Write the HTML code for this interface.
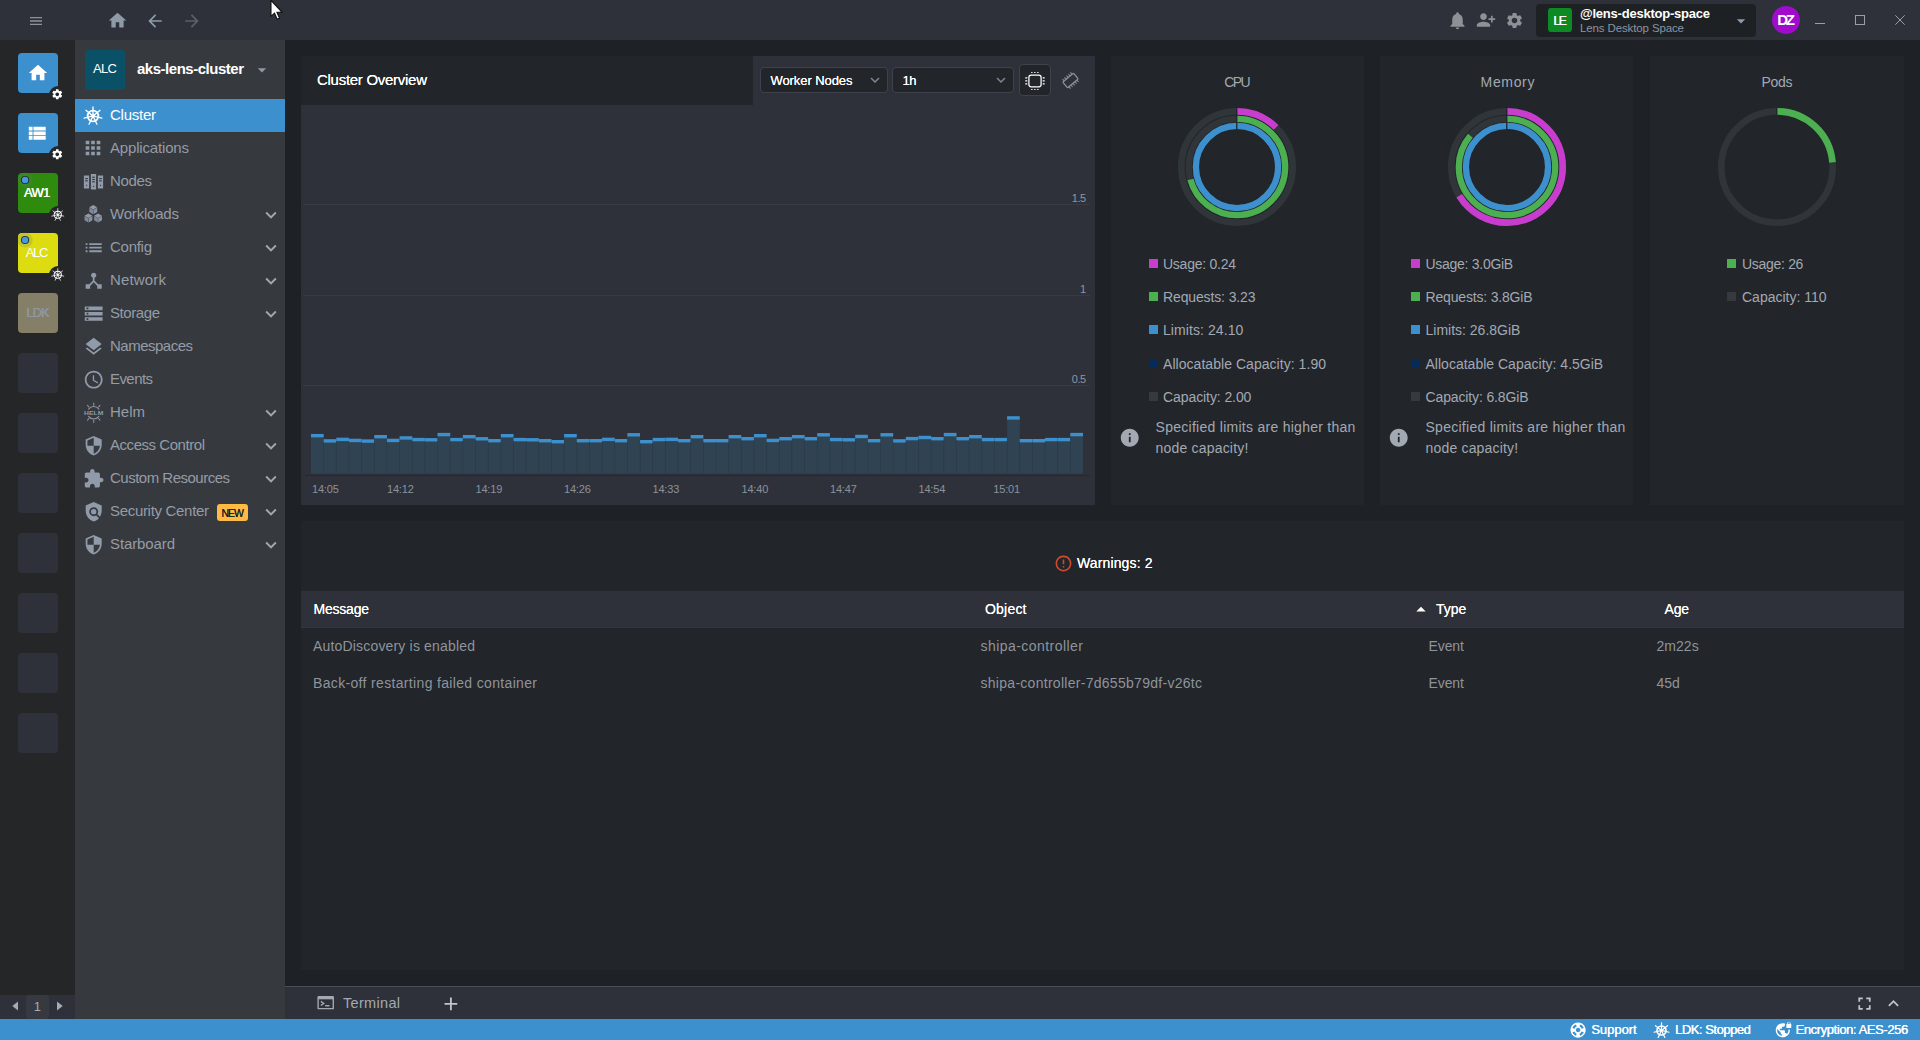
<!DOCTYPE html>
<html><head><meta charset="utf-8"><title>Lens</title>
<style>
html,body{margin:0;padding:0}
body{width:1920px;height:1040px;overflow:hidden;position:relative;background:#1e2125;font-family:"Liberation Sans",sans-serif;}
.b{position:absolute}
.i{position:absolute;overflow:visible}
.t{position:absolute;white-space:nowrap;line-height:20px;height:20px}
</style></head><body>
<div class="b" style="left:0px;top:0px;width:1920px;height:40px;background:#2e3139;"></div>
<div class="b" style="left:0px;top:40px;width:75px;height:979px;background:#252628;"></div>
<div class="b" style="left:75px;top:40px;width:210px;height:979px;background:#36393e;"></div>
<div class="b" style="left:0px;top:1019px;width:1920px;height:21px;background:#3d90ce;"></div>
<svg class="i" style="left:28px;top:12.5px" width="16" height="16" viewBox="0 0 24 24" fill="#8e9297" ><path d="M3 18h18v-2H3v2zm0-5h18v-2H3v2zm0-7v2h18V6H3z"/></svg>
<svg class="i" style="left:107px;top:10px" width="21" height="21" viewBox="0 0 24 24" fill="#8e9aa8" ><path d="M10 20v-6h4v6h5v-8h3L12 3 2 12h3v8z"/></svg>
<svg class="i" style="left:145px;top:10.5px" width="20" height="20" viewBox="0 0 24 24" fill="#8e9aa8" ><path d="M20 11H7.83l5.59-5.59L12 4l-8 8 8 8 1.41-1.41L7.83 13H20v-2z"/></svg>
<svg class="i" style="left:181.5px;top:10.5px" width="20" height="20" viewBox="0 0 24 24" fill="#5a606a" ><path d="M12 4l-1.41 1.41L16.17 11H4v2h12.17l-5.58 5.59L12 20l8-8z"/></svg>
<svg class="i" style="left:1447px;top:9.8px" width="21" height="21" viewBox="0 0 24 24" fill="#8e9297" ><path d="M12 22c1.1 0 2-.9 2-2h-4c0 1.1.89 2 2 2zm6-6v-5c0-3.07-1.64-5.64-4.5-6.32V4c0-.83-.67-1.5-1.5-1.5s-1.5.67-1.5 1.5v.68C7.63 5.36 6 7.92 6 11v5l-2 2v1h16v-1l-2-2z"/></svg>
<svg class="i" style="left:1476px;top:10px" width="20" height="20" viewBox="0 0 24 24" fill="#8e9297" ><path d="M13 8c0-2.21-1.79-4-4-4S5 5.79 5 8s1.79 4 4 4 4-1.79 4-4zm2 2v2h3v3h2v-3h3v-2h-3V7h-2v3h-3zM1 18v2h16v-2c0-2.66-5.33-4-8-4s-8 1.34-8 4z"/></svg>
<svg class="i" style="left:1505px;top:10.5px" width="19" height="19" viewBox="0 0 24 24" fill="#8e9297" ><path d="M19.14 12.94c.04-.3.06-.61.06-.94 0-.32-.02-.64-.07-.94l2.03-1.58c.18-.14.23-.41.12-.61l-1.92-3.32c-.12-.22-.37-.29-.59-.22l-2.39.96c-.5-.38-1.03-.7-1.62-.94l-.36-2.54c-.04-.24-.24-.41-.48-.41h-3.84c-.24 0-.43.17-.47.41l-.36 2.54c-.59.24-1.13.57-1.62.94l-2.39-.96c-.22-.08-.47 0-.59.22L2.74 8.87c-.12.21-.08.47.12.61l2.03 1.58c-.05.3-.09.63-.09.94s.02.64.07.94l-2.03 1.58c-.18.14-.23.41-.12.61l1.92 3.32c.12.22.37.29.59.22l2.39-.96c.5.38 1.03.7 1.62.94l.36 2.54c.05.24.24.41.48.41h3.84c.24 0 .44-.17.47-.41l.36-2.54c.59-.24 1.13-.56 1.62-.94l2.39.96c.22.08.47 0 .59-.22l1.92-3.32c.12-.22.07-.47-.12-.61l-2.01-1.58zM12 15.6c-1.98 0-3.6-1.62-3.6-3.6s1.62-3.6 3.6-3.6 3.6 1.62 3.6 3.6-1.62 3.6-3.6 3.6z"/></svg>
<div class="b" style="left:1536px;top:4px;width:220px;height:33px;background:#1e2124;border-radius:4px;"></div>
<div class="b" style="left:1548px;top:8px;width:24px;height:24px;background:#0e8a25;border-radius:3px;"></div>
<div class="t" style="left:1553.3px;top:10.5px;font-size:12px;color:#fff;letter-spacing:-1.478px;text-shadow:.4px 0 0 #fff;">LE</div>
<div class="t" style="left:1580px;top:3.5px;font-size:13px;color:#fff;font-weight:700;letter-spacing:-0.225px;">@lens-desktop-space</div>
<div class="t" style="left:1580px;top:17.8px;font-size:11.5px;color:#8a94a4;letter-spacing:-0.125px;">Lens Desktop Space</div>
<svg class="i" style="left:1731px;top:10.5px" width="20" height="20" viewBox="0 0 24 24" fill="#8e9ab0" ><path d="M7 10l5 5 5-5z"/></svg>
<div class="b" style="left:1772px;top:6px;width:28px;height:28px;border-radius:50%;background:#a00ccc"></div>
<div class="t" style="left:1777.2px;top:10px;font-size:15px;color:#fff;font-weight:700;letter-spacing:-2.195px;">DZ</div>
<div class="b" style="left:1815px;top:23px;width:10px;height:1px;background:#9a9fa6;"></div>
<div class="b" style="left:1855px;top:15px;width:8px;height:8px;border:1px solid #9a9fa6"></div>
<svg class="i" style="left:1895px;top:15px" width="10" height="10" viewBox="0 0 10 10"><path d="M0.300 0.300L9.700 9.700M9.700 0.300L0.300 9.700" stroke="#9a9fa6" stroke-width="1" fill="none"/></svg>
<svg class="i" style="left:269px;top:0px" width="16" height="22" viewBox="0 0 16 22"><path d="M2 0.400L2 16.400L5.500 13.100L8.200 19.200L10.600 18.200L7.900 12.200L12.900 12.100Z" fill="#fff" stroke="#0c0c0e" stroke-width="1.050" stroke-linejoin="miter"/></svg>
<div class="b" style="left:18px;top:53px;width:40px;height:40px;background:#3d90ce;border-radius:4px;"></div>
<svg class="i" style="left:26.8px;top:62.3px" width="22" height="22" viewBox="0 0 24 24" fill="#fff" ><path d="M10 20v-6h4v6h5v-8h3L12 3 2 12h3v8z"/></svg>
<div class="b" style="left:18px;top:113px;width:40px;height:40px;background:#3d90ce;border-radius:4px;"></div>
<svg class="i" style="left:26.45px;top:122.15px" width="22.5" height="22.5" viewBox="0 0 24 24" fill="#fff" ><path d="M3 14h4v-4H3v4zm0 5h4v-4H3v4zM3 9h4V5H3v4zm5 5h13v-4H8v4zm0 5h13v-4H8v4zM8 5v4h13V5H8z"/></svg>
<div class="b" style="left:18px;top:173px;width:40px;height:40px;background:#2e8b0e;border-radius:4px;"></div>
<div class="t" style="left:23.8px;top:182.5px;font-size:13px;color:#fff;letter-spacing:-0.744px;text-shadow:.4px 0 0 #fff;">AW1</div>
<div class="b" style="left:18px;top:233px;width:40px;height:40px;background:#dcdc10;border-radius:4px;"></div>
<div class="t" style="left:25.8px;top:242.5px;font-size:13px;color:#fff;letter-spacing:-1.395px;">ALC</div>
<div class="b" style="left:18px;top:293px;width:40px;height:40px;background:#857f68;border-radius:4px;"></div>
<div class="t" style="left:26.2px;top:302.5px;font-size:13px;color:#8f97a3;letter-spacing:-0.995px;text-shadow:.4px 0 0 #8f97a3;">LDK</div>
<div class="b" style="left:18px;top:353px;width:40px;height:40px;background:#2e313a;border-radius:4px;"></div>
<div class="b" style="left:18px;top:413px;width:40px;height:40px;background:#2e313a;border-radius:4px;"></div>
<div class="b" style="left:18px;top:473px;width:40px;height:40px;background:#2e313a;border-radius:4px;"></div>
<div class="b" style="left:18px;top:533px;width:40px;height:40px;background:#2e313a;border-radius:4px;"></div>
<div class="b" style="left:18px;top:593px;width:40px;height:40px;background:#2e313a;border-radius:4px;"></div>
<div class="b" style="left:18px;top:653px;width:40px;height:40px;background:#2e313a;border-radius:4px;"></div>
<div class="b" style="left:18px;top:713px;width:40px;height:40px;background:#2e313a;border-radius:4px;"></div>
<div class="b" style="left:48.6px;top:85.5px;width:18px;height:18px;border-radius:50%;background:#252628"></div><svg class="i" style="left:51.35px;top:88.25px" width="12.5" height="12.5" viewBox="0 0 24 24" fill="#fff" ><path d="M19.14 12.94c.04-.3.06-.61.06-.94 0-.32-.02-.64-.07-.94l2.03-1.58c.18-.14.23-.41.12-.61l-1.92-3.32c-.12-.22-.37-.29-.59-.22l-2.39.96c-.5-.38-1.03-.7-1.62-.94l-.36-2.54c-.04-.24-.24-.41-.48-.41h-3.84c-.24 0-.43.17-.47.41l-.36 2.54c-.59.24-1.13.57-1.62.94l-2.39-.96c-.22-.08-.47 0-.59.22L2.74 8.87c-.12.21-.08.47.12.61l2.03 1.58c-.05.3-.09.63-.09.94s.02.64.07.94l-2.03 1.58c-.18.14-.23.41-.12.61l1.92 3.32c.12.22.37.29.59.22l2.39-.96c.5.38 1.03.7 1.62.94l.36 2.54c.05.24.24.41.48.41h3.84c.24 0 .44-.17.47-.41l.36-2.54c.59-.24 1.13-.56 1.62-.94l2.39.96c.22.08.47 0 .59-.22l1.92-3.32c.12-.22.07-.47-.12-.61l-2.01-1.58zM12 15.6c-1.98 0-3.6-1.62-3.6-3.6s1.62-3.6 3.6-3.6 3.6 1.62 3.6 3.6-1.62 3.6-3.6 3.6z"/></svg>
<div class="b" style="left:48.6px;top:145.5px;width:18px;height:18px;border-radius:50%;background:#252628"></div><svg class="i" style="left:51.35px;top:148.25px" width="12.5" height="12.5" viewBox="0 0 24 24" fill="#fff" ><path d="M19.14 12.94c.04-.3.06-.61.06-.94 0-.32-.02-.64-.07-.94l2.03-1.58c.18-.14.23-.41.12-.61l-1.92-3.32c-.12-.22-.37-.29-.59-.22l-2.39.96c-.5-.38-1.03-.7-1.62-.94l-.36-2.54c-.04-.24-.24-.41-.48-.41h-3.84c-.24 0-.43.17-.47.41l-.36 2.54c-.59.24-1.13.57-1.62.94l-2.39-.96c-.22-.08-.47 0-.59.22L2.74 8.87c-.12.21-.08.47.12.61l2.03 1.58c-.05.3-.09.63-.09.94s.02.64.07.94l-2.03 1.58c-.18.14-.23.41-.12.61l1.92 3.32c.12.22.37.29.59.22l2.39-.96c.5.38 1.03.7 1.62.94l.36 2.54c.05.24.24.41.48.41h3.84c.24 0 .44-.17.47-.41l.36-2.54c.59-.24 1.13-.56 1.62-.94l2.39.96c.22.08.47 0 .59-.22l1.92-3.32c.12-.22.07-.47-.12-.61l-2.01-1.58zM12 15.6c-1.98 0-3.6-1.62-3.6-3.6s1.62-3.6 3.6-3.6 3.6 1.62 3.6 3.6-1.62 3.6-3.6 3.6z"/></svg>
<div class="b" style="left:48.6px;top:205.5px;width:18px;height:18px;border-radius:50%;background:#252628"></div><svg class="i" style="left:50.85px;top:207.75px" width="13.5" height="13.5" viewBox="0 0 24 24" fill="#fff" ><g fill="none" stroke="#fff" stroke-linecap="round"><circle cx="12" cy="12" r="6.400" stroke-width="1.8125"/><line x1="12.00" y1="10.80" x2="12.00" y2="1.10" stroke-width="1.3125"/><line x1="12.94" y1="11.25" x2="20.52" y2="5.20" stroke-width="1.3125"/><line x1="13.17" y1="12.27" x2="22.63" y2="14.43" stroke-width="1.3125"/><line x1="12.52" y1="13.08" x2="16.73" y2="21.82" stroke-width="1.3125"/><line x1="11.48" y1="13.08" x2="7.27" y2="21.82" stroke-width="1.3125"/><line x1="10.83" y1="12.27" x2="1.37" y2="14.43" stroke-width="1.3125"/><line x1="11.06" y1="11.25" x2="3.48" y2="5.20" stroke-width="1.3125"/></g><circle cx="12" cy="12" r="2" fill="#fff"/></svg>
<div class="b" style="left:48.6px;top:265.5px;width:18px;height:18px;border-radius:50%;background:#252628"></div><svg class="i" style="left:50.85px;top:267.75px" width="13.5" height="13.5" viewBox="0 0 24 24" fill="#fff" ><g fill="none" stroke="#fff" stroke-linecap="round"><circle cx="12" cy="12" r="6.400" stroke-width="1.8125"/><line x1="12.00" y1="10.80" x2="12.00" y2="1.10" stroke-width="1.3125"/><line x1="12.94" y1="11.25" x2="20.52" y2="5.20" stroke-width="1.3125"/><line x1="13.17" y1="12.27" x2="22.63" y2="14.43" stroke-width="1.3125"/><line x1="12.52" y1="13.08" x2="16.73" y2="21.82" stroke-width="1.3125"/><line x1="11.48" y1="13.08" x2="7.27" y2="21.82" stroke-width="1.3125"/><line x1="10.83" y1="12.27" x2="1.37" y2="14.43" stroke-width="1.3125"/><line x1="11.06" y1="11.25" x2="3.48" y2="5.20" stroke-width="1.3125"/></g><circle cx="12" cy="12" r="2" fill="#fff"/></svg>
<svg class="i" style="left:15px;top:170px" width="20" height="20" viewBox="0 0 20 20"><circle cx="10.1" cy="10" r="7.600" fill="rgba(110,125,120,.22)"/><circle cx="10.1" cy="10" r="4.100" fill="#1f2930"/><circle cx="10.1" cy="10" r="3.200" fill="#4898de"/></svg>
<svg class="i" style="left:15px;top:230px" width="20" height="20" viewBox="0 0 20 20"><circle cx="10.1" cy="10" r="7.600" fill="rgba(110,125,120,.22)"/><circle cx="10.1" cy="10" r="4.100" fill="#1f2930"/><circle cx="10.1" cy="10" r="3.200" fill="#4898de"/></svg>
<div class="b" style="left:0px;top:995px;width:75px;height:24px;background:#2e3139;"></div>
<div class="b" style="left:26px;top:995px;width:23px;height:24px;background:#363a40;border-radius:4px;"></div>
<svg class="i" style="left:11px;top:1000.4px" width="8" height="12" viewBox="0 0 8 12"><path d="M7 1.500v9L1.300 6z" fill="#a4abb4"/></svg>
<svg class="i" style="left:56px;top:1000.4px" width="8" height="12" viewBox="0 0 8 12"><path d="M1 1.500v9L6.700 6z" fill="#a4abb4"/></svg>
<div class="t" style="left:33.8px;top:996.6px;font-size:13px;color:#a4abb4;">1</div>
<div class="b" style="left:85px;top:50px;width:40px;height:40px;background:#0a5168;border-radius:4px;"></div>
<div class="t" style="left:93px;top:59px;font-size:13px;color:#fff;letter-spacing:-0.645px;">ALC</div>
<div class="t" style="left:137px;top:59px;font-size:15px;color:#fff;font-weight:700;letter-spacing:-0.481px;">aks-lens-cluster</div>
<svg class="i" style="left:252px;top:60px" width="20" height="20" viewBox="0 0 24 24" fill="#8e9aa8" ><path d="M7 10l5 5 5-5z"/></svg>
<div class="b" style="left:75px;top:99px;width:210px;height:33px;background:#3d90ce;"></div>
<div class="t" style="left:110px;top:105px;font-size:15px;color:#fff;letter-spacing:-0.252px;">Cluster</div>
<svg class="i" style="left:82.7px;top:105.5px" width="20" height="20" viewBox="0 0 24 24" fill="#fff" ><g fill="none" stroke="#fff" stroke-linecap="round"><circle cx="12" cy="12" r="6.400" stroke-width="2.175"/><line x1="12.00" y1="10.80" x2="12.00" y2="1.10" stroke-width="1.575"/><line x1="12.94" y1="11.25" x2="20.52" y2="5.20" stroke-width="1.575"/><line x1="13.17" y1="12.27" x2="22.63" y2="14.43" stroke-width="1.575"/><line x1="12.52" y1="13.08" x2="16.73" y2="21.82" stroke-width="1.575"/><line x1="11.48" y1="13.08" x2="7.27" y2="21.82" stroke-width="1.575"/><line x1="10.83" y1="12.27" x2="1.37" y2="14.43" stroke-width="1.575"/><line x1="11.06" y1="11.25" x2="3.48" y2="5.20" stroke-width="1.575"/></g><circle cx="12" cy="12" r="2" fill="#fff"/></svg>
<div class="t" style="left:110px;top:138px;font-size:15px;color:#959ca6;letter-spacing:-0.171px;">Applications</div>
<svg class="i" style="left:82.3px;top:137.1px" width="22" height="22" viewBox="0 0 24 24" fill="#909aa8" ><path d="M4 8h4V4H4v4zm6 12h4v-4h-4v4zm-6 0h4v-4H4v4zm0-6h4v-4H4v4zm6 0h4v-4h-4v4zm6-10v4h4V4h-4zm-6 4h4V4h-4v4zm6 6h4v-4h-4v4zm0 6h4v-4h-4v4z"/></svg>
<div class="t" style="left:110px;top:171px;font-size:15px;color:#959ca6;letter-spacing:-0.340px;">Nodes</div>
<svg class="i" style="left:82.8px;top:171px" width="21" height="21" viewBox="0 0 24 24" fill="#909aa8" ><path d="M1 5h6v15H1zM9 3.5h6V21H9zM17 5h6v15h-6z"/><g fill="#36393e"><rect x="2.5" y="8" width="3" height="1.3"/><rect x="2.5" y="10.6" width="3" height="1.3"/><rect x="10.5" y="6.5" width="3" height="1.3"/><rect x="10.5" y="9.1" width="3" height="1.3"/><rect x="10.5" y="11.7" width="3" height="1.3"/><rect x="18.500" y="8" width="3" height="1.3"/><rect x="18.500" y="10.6" width="3" height="1.3"/><rect x="3.4" y="15.800" width="1.3" height="1.3"/><rect x="11.4" y="17" width="1.3" height="1.3"/><rect x="19.4" y="15.800" width="1.3" height="1.3"/></g></svg>
<div class="t" style="left:110px;top:204px;font-size:15px;color:#959ca6;letter-spacing:-0.198px;">Workloads</div>
<svg class="i" style="left:83.05px;top:204.05px" width="20.5" height="20.5" viewBox="0 0 24 24" fill="#909aa8" ><path d="M12 1.3L16.611 3.95L12 6.6L7.389 3.95Z" opacity="1"/><path d="M7.389 4.4L11.78 6.95L11.78 12.1L7.389 9.45Z" opacity=".82"/><path d="M16.611 4.4L12.22 6.95L12.22 12.1L16.611 9.45Z" opacity=".92"/><path d="M6.4 11L11.011 13.65L6.4 16.3L1.789 13.65Z" opacity="1"/><path d="M1.789 14.1L6.18 16.65L6.18 21.8L1.789 19.15Z" opacity=".82"/><path d="M11.011 14.1L6.62 16.65L6.62 21.8L11.011 19.15Z" opacity=".92"/><path d="M17.6 11L22.211 13.65L17.6 16.3L12.989 13.65Z" opacity="1"/><path d="M12.989 14.1L17.38 16.65L17.38 21.8L12.989 19.15Z" opacity=".82"/><path d="M22.211 14.1L17.82 16.65L17.82 21.8L22.211 19.15Z" opacity=".92"/></svg>
<svg class="i" style="left:259.6px;top:203.5px" width="22" height="22" viewBox="0 0 24 24" fill="#a0a7b0" ><path d="M7.41 8.59L12 13.17l4.59-4.58L18 10l-6 6-6-6 1.41-1.41z"/></svg>
<div class="t" style="left:110px;top:237px;font-size:15px;color:#959ca6;letter-spacing:-0.272px;">Config</div>
<svg class="i" style="left:82.7px;top:236.8px" width="21.4" height="21.4" viewBox="0 0 24 24" fill="#909aa8" ><path d="M3 13h2v-2H3v2zm0 4h2v-2H3v2zm0-8h2V7H3v2zm4 4h14v-2H7v2zm0 4h14v-2H7v2zM7 7v2h14V7H7z"/></svg>
<svg class="i" style="left:259.6px;top:236.5px" width="22" height="22" viewBox="0 0 24 24" fill="#a0a7b0" ><path d="M7.41 8.59L12 13.17l4.59-4.58L18 10l-6 6-6-6 1.41-1.41z"/></svg>
<div class="t" style="left:110px;top:270px;font-size:15px;color:#959ca6;letter-spacing:0.165px;">Network</div>
<svg class="i" style="left:82.7px;top:269.8px" width="21.4" height="21.4" viewBox="0 0 24 24" fill="#909aa8" ><path d="M17 16l-4-4V8.82C14.16 8.4 15 7.3 15 6c0-1.66-1.34-3-3-3S9 4.34 9 6c0 1.3.84 2.4 2 2.82V12l-4 4H3v5h5v-3.05l4-4.2 4 4.2V21h5v-5h-4z"/></svg>
<svg class="i" style="left:259.6px;top:269.5px" width="22" height="22" viewBox="0 0 24 24" fill="#a0a7b0" ><path d="M7.41 8.59L12 13.17l4.59-4.58L18 10l-6 6-6-6 1.41-1.41z"/></svg>
<div class="t" style="left:110px;top:303px;font-size:15px;color:#959ca6;letter-spacing:-0.423px;">Storage</div>
<svg class="i" style="left:82.7px;top:302.8px" width="21.4" height="21.4" viewBox="0 0 24 24" fill="#909aa8" ><path d="M2 20h20v-4H2v4zm2-3h2v2H4v-2zM2 4v4h20V4H2zm4 3H4V5h2v2zm-4 7h20v-4H2v4zm2-3h2v2H4v-2z"/></svg>
<svg class="i" style="left:259.6px;top:302.5px" width="22" height="22" viewBox="0 0 24 24" fill="#a0a7b0" ><path d="M7.41 8.59L12 13.17l4.59-4.58L18 10l-6 6-6-6 1.41-1.41z"/></svg>
<div class="t" style="left:110px;top:336px;font-size:15px;color:#959ca6;letter-spacing:-0.504px;">Namespaces</div>
<svg class="i" style="left:82.7px;top:335.8px" width="21.4" height="21.4" viewBox="0 0 24 24" fill="#909aa8" ><path d="M11.99 18.54l-7.37-5.73L3 14.07l9 7 9-7-1.63-1.27-7.38 5.74zM12 16l7.36-5.73L21 9l-9-7-9 7 1.63 1.27L12 16z"/></svg>
<div class="t" style="left:110px;top:369px;font-size:15px;color:#959ca6;letter-spacing:-0.571px;">Events</div>
<svg class="i" style="left:82.7px;top:368.8px" width="21.4" height="21.4" viewBox="0 0 24 24" fill="#909aa8" ><path d="M11.99 2C6.47 2 2 6.48 2 12s4.47 10 9.99 10C17.52 22 22 17.52 22 12S17.52 2 11.99 2zM12 20c-4.42 0-8-3.58-8-8s3.58-8 8-8 8 3.58 8 8-3.58 8-8 8zm.5-13H11v6l5.25 3.15.75-1.23-4.5-2.67z"/></svg>
<div class="t" style="left:110px;top:402px;font-size:15px;color:#959ca6;letter-spacing:-0.001px;">Helm</div>
<svg class="i" style="left:82.65px;top:401.75px" width="21.5" height="21.5" viewBox="0 0 24 24" fill="#909aa8" ><g fill="none" stroke="#909aa8" stroke-width="1.15" stroke-linecap="round"><path d="M6.270 8A7 7 0 0 1 17.730 8"/><path d="M6.270 16A7 7 0 0 0 17.730 16"/><path d="M12 3.600V1.200M6.600 5.570L5.060 3.730M17.400 5.570L18.940 3.730M12 20.400V22.800M6.600 18.430L5.060 20.270M17.400 18.430L18.940 20.270"/></g><text x="12" y="14.250" font-family="Liberation Sans, sans-serif" font-weight="700" font-size="6.200" text-anchor="middle" textLength="21.500" lengthAdjust="spacingAndGlyphs" fill="#909aa8">HELM</text></svg>
<svg class="i" style="left:259.6px;top:401.5px" width="22" height="22" viewBox="0 0 24 24" fill="#a0a7b0" ><path d="M7.41 8.59L12 13.17l4.59-4.58L18 10l-6 6-6-6 1.41-1.41z"/></svg>
<div class="t" style="left:110px;top:435px;font-size:15px;color:#959ca6;letter-spacing:-0.452px;">Access Control</div>
<svg class="i" style="left:82.7px;top:434.8px" width="21.4" height="21.4" viewBox="0 0 24 24" fill="#909aa8" ><path d="M12 1L3 5v6c0 5.55 3.84 10.74 9 12 5.16-1.26 9-6.45 9-12V5l-9-4zm0 10.99h7c-.53 4.12-3.28 7.79-7 8.94V12H5V6.3l7-3.11v8.8z"/></svg>
<svg class="i" style="left:259.6px;top:434.5px" width="22" height="22" viewBox="0 0 24 24" fill="#a0a7b0" ><path d="M7.41 8.59L12 13.17l4.59-4.58L18 10l-6 6-6-6 1.41-1.41z"/></svg>
<div class="t" style="left:110px;top:468px;font-size:15px;color:#959ca6;letter-spacing:-0.503px;">Custom Resources</div>
<svg class="i" style="left:82.7px;top:467.8px" width="21.4" height="21.4" viewBox="0 0 24 24" fill="#909aa8" ><path d="M20.5 11H19V7c0-1.1-.9-2-2-2h-4V3.5C13 2.12 11.88 1 10.5 1S8 2.12 8 3.5V5H4c-1.1 0-1.99.9-1.99 2v3.8H3.5c1.49 0 2.7 1.21 2.7 2.7s-1.21 2.7-2.7 2.7H2V20c0 1.1.9 2 2 2h3.8v-1.5c0-1.49 1.21-2.7 2.7-2.7 1.49 0 2.7 1.21 2.7 2.7V22H17c1.1 0 2-.9 2-2v-4h1.5c1.38 0 2.5-1.12 2.5-2.5S21.88 11 20.5 11z"/></svg>
<svg class="i" style="left:259.6px;top:467.5px" width="22" height="22" viewBox="0 0 24 24" fill="#a0a7b0" ><path d="M7.41 8.59L12 13.17l4.59-4.58L18 10l-6 6-6-6 1.41-1.41z"/></svg>
<div class="t" style="left:110px;top:501px;font-size:15px;color:#959ca6;letter-spacing:-0.312px;">Security Center</div>
<svg class="i" style="left:82.7px;top:500.8px" width="21.4" height="21.4" viewBox="0 0 24 24" fill="#909aa8" ><path d="M21 5l-9-4-9 4v6c0 5.55 3.84 10.74 9 12 2.3-.56 4.33-1.9 5.88-3.71l-3.12-3.12c-1.94 1.29-4.58 1.07-6.29-.64-1.95-1.95-1.95-5.12 0-7.07 1.95-1.95 5.12-1.95 7.07 0 1.71 1.71 1.92 4.35.64 6.29l2.9 2.9C20.29 15.69 21 13.38 21 11V5z"/><circle cx="12" cy="12" r="3"/></svg>
<svg class="i" style="left:259.6px;top:500.5px" width="22" height="22" viewBox="0 0 24 24" fill="#a0a7b0" ><path d="M7.41 8.59L12 13.17l4.59-4.58L18 10l-6 6-6-6 1.41-1.41z"/></svg>
<div class="t" style="left:110px;top:534px;font-size:15px;color:#959ca6;letter-spacing:-0.109px;">Starboard</div>
<svg class="i" style="left:82.7px;top:533.8px" width="21.4" height="21.4" viewBox="0 0 24 24" fill="#909aa8" ><path d="M12 1L3 5v6c0 5.55 3.84 10.74 9 12 5.16-1.26 9-6.45 9-12V5l-9-4zm0 10.99h7c-.53 4.12-3.28 7.79-7 8.94V12H5V6.3l7-3.11v8.8z"/></svg>
<svg class="i" style="left:259.6px;top:533.5px" width="22" height="22" viewBox="0 0 24 24" fill="#a0a7b0" ><path d="M7.41 8.59L12 13.17l4.59-4.58L18 10l-6 6-6-6 1.41-1.41z"/></svg>
<div class="b" style="left:217px;top:504px;width:31px;height:17px;background:#ffba44;border-radius:3px;"></div>
<div class="t" style="left:221.6px;top:502.6px;font-size:10.5px;color:#1c1f24;letter-spacing:-1.148px;text-shadow:0 0 .4px #1c1f24;">NEW</div>
<div class="b" style="left:301px;top:56px;width:794px;height:449px;background:#2e3139;"></div>
<div class="b" style="left:301px;top:56px;width:452px;height:48.5px;background:#22252a;"></div>
<div class="t" style="left:317px;top:70px;font-size:15px;color:#fff;letter-spacing:-0.279px;text-shadow:0 0 .4px #fff;">Cluster Overview</div>
<div class="b" style="left:760px;top:67px;width:128px;height:26px;background:#22252a;border:1px solid #3e424a;border-radius:4px;box-sizing:border-box;"></div><div class="t" style="left:770.5px;top:70.5px;font-size:13px;color:#fff;letter-spacing:-0.077px;text-shadow:0 0 .5px #fff;">Worker Nodes</div><svg class="i" style="left:865.7px;top:71.3px" width="18" height="18" viewBox="0 0 24 24" fill="#7f868f" ><path d="M7.41 8.59L12 13.17l4.59-4.58L18 10l-6 6-6-6 1.41-1.41z"/></svg>
<div class="b" style="left:892px;top:67px;width:122px;height:26px;background:#22252a;border:1px solid #3e424a;border-radius:4px;box-sizing:border-box;"></div><div class="t" style="left:902.5px;top:70.5px;font-size:13px;color:#fff;letter-spacing:-0.460px;text-shadow:0 0 .5px #fff;">1h</div><svg class="i" style="left:991.7px;top:71.3px" width="18" height="18" viewBox="0 0 24 24" fill="#7f868f" ><path d="M7.41 8.59L12 13.17l4.59-4.58L18 10l-6 6-6-6 1.41-1.41z"/></svg>
<div class="b" style="left:1019px;top:64px;width:32px;height:32px;background:#22252a;border:1px solid #3e424a;border-radius:4px;box-sizing:border-box;"></div>
<svg class="i" style="left:1022.8px;top:68.5px" width="24" height="24" viewBox="0 0 24 24" fill="none" ><g fill="none" stroke="#fff" stroke-width="1.25"><rect x="5.900" y="6.200" width="12.200" height="11.600" rx="2.200"/></g><g stroke="#fff" stroke-dasharray="1.300 1.700"><path d="M8.200 3.500h9M8.200 20.500h9" stroke-width="1.100"/><path d="M3.300 8.200v9M20.700 8.200v9" stroke-width="2"/></g></svg>
<svg class="i" style="left:1059px;top:69px" width="23" height="23" viewBox="0 0 24 24" fill="none" ><g transform="rotate(-40 12 12)" fill="none" stroke="#8a929c"><rect x="4.700" y="8.100" width="14.600" height="7.800" rx="1" stroke-width="1.350"/><path d="M6.6 15.900v2.700M6.6 8.100v-2.700M9.3 15.900v2.700M9.3 8.100v-2.700M12 15.900v2.700M12 8.100v-2.700M14.7 15.900v2.700M14.7 8.100v-2.700M17.4 15.900v2.700M17.4 8.100v-2.700" stroke-width="1.100"/></g></svg>
<div class="b" style="left:303px;top:204px;width:787px;height:1px;background:#383c40;"></div>
<div class="t" style="left:1071.8px;top:188px;font-size:11px;color:#8f97a2;letter-spacing:-0.496px;">1.5</div>
<div class="b" style="left:303px;top:295px;width:787px;height:1px;background:#383c40;"></div>
<div class="t" style="left:1080.1px;top:279px;font-size:11px;color:#8f97a2;letter-spacing:-1.718px;">1</div>
<div class="b" style="left:303px;top:385px;width:787px;height:1px;background:#383c40;"></div>
<div class="t" style="left:1071.8px;top:369px;font-size:11px;color:#8f97a2;letter-spacing:-0.496px;">0.5</div>
<div class="b" style="left:305px;top:475px;width:785px;height:1px;background:#25282e;"></div>
<svg class="i" style="left:0;top:400px" width="1100" height="80" viewBox="0 400 1100 80" shape-rendering="auto"><rect x="311.00" y="433.96" width="12.66" height="39.64" fill="#304352"/><rect x="311.00" y="433.96" width="12.66" height="3.4" fill="#3d90ce"/><rect x="323.66" y="439.20" width="12.66" height="34.40" fill="#304352"/><rect x="323.66" y="439.20" width="12.66" height="3.4" fill="#3d90ce"/><rect x="336.31" y="437.70" width="12.66" height="35.90" fill="#304352"/><rect x="336.31" y="437.70" width="12.66" height="3.4" fill="#3d90ce"/><rect x="348.97" y="438.75" width="12.66" height="34.85" fill="#304352"/><rect x="348.97" y="438.75" width="12.66" height="3.4" fill="#3d90ce"/><rect x="361.62" y="439.40" width="12.66" height="34.20" fill="#304352"/><rect x="361.62" y="439.40" width="12.66" height="3.4" fill="#3d90ce"/><rect x="374.28" y="435.00" width="12.66" height="38.60" fill="#304352"/><rect x="374.28" y="435.00" width="12.66" height="3.4" fill="#3d90ce"/><rect x="386.93" y="438.75" width="12.66" height="34.85" fill="#304352"/><rect x="386.93" y="438.75" width="12.66" height="3.4" fill="#3d90ce"/><rect x="399.59" y="436.25" width="12.66" height="37.35" fill="#304352"/><rect x="399.59" y="436.25" width="12.66" height="3.4" fill="#3d90ce"/><rect x="412.25" y="437.90" width="12.66" height="35.70" fill="#304352"/><rect x="412.25" y="437.90" width="12.66" height="3.4" fill="#3d90ce"/><rect x="424.90" y="438.10" width="12.66" height="35.50" fill="#304352"/><rect x="424.90" y="438.10" width="12.66" height="3.4" fill="#3d90ce"/><rect x="437.56" y="432.90" width="12.66" height="40.70" fill="#304352"/><rect x="437.56" y="432.90" width="12.66" height="3.4" fill="#3d90ce"/><rect x="450.21" y="437.90" width="12.66" height="35.70" fill="#304352"/><rect x="450.21" y="437.90" width="12.66" height="3.4" fill="#3d90ce"/><rect x="462.87" y="435.00" width="12.66" height="38.60" fill="#304352"/><rect x="462.87" y="435.00" width="12.66" height="3.4" fill="#3d90ce"/><rect x="475.52" y="437.10" width="12.66" height="36.50" fill="#304352"/><rect x="475.52" y="437.10" width="12.66" height="3.4" fill="#3d90ce"/><rect x="488.18" y="439.00" width="12.66" height="34.60" fill="#304352"/><rect x="488.18" y="439.00" width="12.66" height="3.4" fill="#3d90ce"/><rect x="500.84" y="434.00" width="12.66" height="39.60" fill="#304352"/><rect x="500.84" y="434.00" width="12.66" height="3.4" fill="#3d90ce"/><rect x="513.49" y="437.90" width="12.66" height="35.70" fill="#304352"/><rect x="513.49" y="437.90" width="12.66" height="3.4" fill="#3d90ce"/><rect x="526.15" y="438.10" width="12.66" height="35.50" fill="#304352"/><rect x="526.15" y="438.10" width="12.66" height="3.4" fill="#3d90ce"/><rect x="538.80" y="439.00" width="12.66" height="34.60" fill="#304352"/><rect x="538.80" y="439.00" width="12.66" height="3.4" fill="#3d90ce"/><rect x="551.46" y="440.00" width="12.66" height="33.60" fill="#304352"/><rect x="551.46" y="440.00" width="12.66" height="3.4" fill="#3d90ce"/><rect x="564.11" y="434.00" width="12.66" height="39.60" fill="#304352"/><rect x="564.11" y="434.00" width="12.66" height="3.4" fill="#3d90ce"/><rect x="576.77" y="439.00" width="12.66" height="34.60" fill="#304352"/><rect x="576.77" y="439.00" width="12.66" height="3.4" fill="#3d90ce"/><rect x="589.43" y="439.00" width="12.66" height="34.60" fill="#304352"/><rect x="589.43" y="439.00" width="12.66" height="3.4" fill="#3d90ce"/><rect x="602.08" y="437.70" width="12.66" height="35.90" fill="#304352"/><rect x="602.08" y="437.70" width="12.66" height="3.4" fill="#3d90ce"/><rect x="614.74" y="439.00" width="12.66" height="34.60" fill="#304352"/><rect x="614.74" y="439.00" width="12.66" height="3.4" fill="#3d90ce"/><rect x="627.39" y="433.10" width="12.66" height="40.50" fill="#304352"/><rect x="627.39" y="433.10" width="12.66" height="3.4" fill="#3d90ce"/><rect x="640.05" y="440.00" width="12.66" height="33.60" fill="#304352"/><rect x="640.05" y="440.00" width="12.66" height="3.4" fill="#3d90ce"/><rect x="652.70" y="437.90" width="12.66" height="35.70" fill="#304352"/><rect x="652.70" y="437.90" width="12.66" height="3.4" fill="#3d90ce"/><rect x="665.36" y="437.70" width="12.66" height="35.90" fill="#304352"/><rect x="665.36" y="437.70" width="12.66" height="3.4" fill="#3d90ce"/><rect x="678.02" y="439.00" width="12.66" height="34.60" fill="#304352"/><rect x="678.02" y="439.00" width="12.66" height="3.4" fill="#3d90ce"/><rect x="690.67" y="435.00" width="12.66" height="38.60" fill="#304352"/><rect x="690.67" y="435.00" width="12.66" height="3.4" fill="#3d90ce"/><rect x="703.33" y="439.00" width="12.66" height="34.60" fill="#304352"/><rect x="703.33" y="439.00" width="12.66" height="3.4" fill="#3d90ce"/><rect x="715.98" y="439.00" width="12.66" height="34.60" fill="#304352"/><rect x="715.98" y="439.00" width="12.66" height="3.4" fill="#3d90ce"/><rect x="728.64" y="435.00" width="12.66" height="38.60" fill="#304352"/><rect x="728.64" y="435.00" width="12.66" height="3.4" fill="#3d90ce"/><rect x="741.30" y="437.00" width="12.66" height="36.60" fill="#304352"/><rect x="741.30" y="437.00" width="12.66" height="3.4" fill="#3d90ce"/><rect x="753.95" y="434.00" width="12.66" height="39.60" fill="#304352"/><rect x="753.95" y="434.00" width="12.66" height="3.4" fill="#3d90ce"/><rect x="766.61" y="438.75" width="12.66" height="34.85" fill="#304352"/><rect x="766.61" y="438.75" width="12.66" height="3.4" fill="#3d90ce"/><rect x="779.26" y="437.00" width="12.66" height="36.60" fill="#304352"/><rect x="779.26" y="437.00" width="12.66" height="3.4" fill="#3d90ce"/><rect x="791.92" y="435.00" width="12.66" height="38.60" fill="#304352"/><rect x="791.92" y="435.00" width="12.66" height="3.4" fill="#3d90ce"/><rect x="804.57" y="437.00" width="12.66" height="36.60" fill="#304352"/><rect x="804.57" y="437.00" width="12.66" height="3.4" fill="#3d90ce"/><rect x="817.23" y="433.10" width="12.66" height="40.50" fill="#304352"/><rect x="817.23" y="433.10" width="12.66" height="3.4" fill="#3d90ce"/><rect x="829.89" y="437.90" width="12.66" height="35.70" fill="#304352"/><rect x="829.89" y="437.90" width="12.66" height="3.4" fill="#3d90ce"/><rect x="842.54" y="438.10" width="12.66" height="35.50" fill="#304352"/><rect x="842.54" y="438.10" width="12.66" height="3.4" fill="#3d90ce"/><rect x="855.20" y="434.80" width="12.66" height="38.80" fill="#304352"/><rect x="855.20" y="434.80" width="12.66" height="3.4" fill="#3d90ce"/><rect x="867.85" y="439.00" width="12.66" height="34.60" fill="#304352"/><rect x="867.85" y="439.00" width="12.66" height="3.4" fill="#3d90ce"/><rect x="880.51" y="433.10" width="12.66" height="40.50" fill="#304352"/><rect x="880.51" y="433.10" width="12.66" height="3.4" fill="#3d90ce"/><rect x="893.16" y="439.20" width="12.66" height="34.40" fill="#304352"/><rect x="893.16" y="439.20" width="12.66" height="3.4" fill="#3d90ce"/><rect x="905.82" y="436.90" width="12.66" height="36.70" fill="#304352"/><rect x="905.82" y="436.90" width="12.66" height="3.4" fill="#3d90ce"/><rect x="918.48" y="435.80" width="12.66" height="37.80" fill="#304352"/><rect x="918.48" y="435.80" width="12.66" height="3.4" fill="#3d90ce"/><rect x="931.13" y="437.00" width="12.66" height="36.60" fill="#304352"/><rect x="931.13" y="437.00" width="12.66" height="3.4" fill="#3d90ce"/><rect x="943.79" y="432.90" width="12.66" height="40.70" fill="#304352"/><rect x="943.79" y="432.90" width="12.66" height="3.4" fill="#3d90ce"/><rect x="956.44" y="437.00" width="12.66" height="36.60" fill="#304352"/><rect x="956.44" y="437.00" width="12.66" height="3.4" fill="#3d90ce"/><rect x="969.10" y="435.00" width="12.66" height="38.60" fill="#304352"/><rect x="969.10" y="435.00" width="12.66" height="3.4" fill="#3d90ce"/><rect x="981.75" y="437.90" width="12.66" height="35.70" fill="#304352"/><rect x="981.75" y="437.90" width="12.66" height="3.4" fill="#3d90ce"/><rect x="994.41" y="437.90" width="12.66" height="35.70" fill="#304352"/><rect x="994.41" y="437.90" width="12.66" height="3.4" fill="#3d90ce"/><rect x="1007.07" y="416.25" width="12.66" height="57.35" fill="#304352"/><rect x="1007.07" y="416.25" width="12.66" height="3.4" fill="#3d90ce"/><rect x="1019.72" y="439.00" width="12.66" height="34.60" fill="#304352"/><rect x="1019.72" y="439.00" width="12.66" height="3.4" fill="#3d90ce"/><rect x="1032.38" y="439.00" width="12.66" height="34.60" fill="#304352"/><rect x="1032.38" y="439.00" width="12.66" height="3.4" fill="#3d90ce"/><rect x="1045.03" y="437.90" width="12.66" height="35.70" fill="#304352"/><rect x="1045.03" y="437.90" width="12.66" height="3.4" fill="#3d90ce"/><rect x="1057.69" y="437.90" width="12.66" height="35.70" fill="#304352"/><rect x="1057.69" y="437.90" width="12.66" height="3.4" fill="#3d90ce"/><rect x="1070.34" y="432.90" width="12.66" height="40.70" fill="#304352"/><rect x="1070.34" y="432.90" width="12.66" height="3.4" fill="#3d90ce"/><rect x="323.26" y="442.60" width="0.8" height="31.00" fill="#2c3d4a"/><rect x="335.91" y="442.60" width="0.8" height="31.00" fill="#2c3d4a"/><rect x="348.57" y="442.15" width="0.8" height="31.45" fill="#2c3d4a"/><rect x="361.22" y="442.80" width="0.8" height="30.80" fill="#2c3d4a"/><rect x="373.88" y="442.80" width="0.8" height="30.80" fill="#2c3d4a"/><rect x="386.53" y="442.15" width="0.8" height="31.45" fill="#2c3d4a"/><rect x="399.19" y="442.15" width="0.8" height="31.45" fill="#2c3d4a"/><rect x="411.85" y="441.30" width="0.8" height="32.30" fill="#2c3d4a"/><rect x="424.50" y="441.50" width="0.8" height="32.10" fill="#2c3d4a"/><rect x="437.16" y="441.50" width="0.8" height="32.10" fill="#2c3d4a"/><rect x="449.81" y="441.30" width="0.8" height="32.30" fill="#2c3d4a"/><rect x="462.47" y="441.30" width="0.8" height="32.30" fill="#2c3d4a"/><rect x="475.12" y="440.50" width="0.8" height="33.10" fill="#2c3d4a"/><rect x="487.78" y="442.40" width="0.8" height="31.20" fill="#2c3d4a"/><rect x="500.44" y="442.40" width="0.8" height="31.20" fill="#2c3d4a"/><rect x="513.09" y="441.30" width="0.8" height="32.30" fill="#2c3d4a"/><rect x="525.75" y="441.50" width="0.8" height="32.10" fill="#2c3d4a"/><rect x="538.40" y="442.40" width="0.8" height="31.20" fill="#2c3d4a"/><rect x="551.06" y="443.40" width="0.8" height="30.20" fill="#2c3d4a"/><rect x="563.71" y="443.40" width="0.8" height="30.20" fill="#2c3d4a"/><rect x="576.37" y="442.40" width="0.8" height="31.20" fill="#2c3d4a"/><rect x="589.03" y="442.40" width="0.8" height="31.20" fill="#2c3d4a"/><rect x="601.68" y="442.40" width="0.8" height="31.20" fill="#2c3d4a"/><rect x="614.34" y="442.40" width="0.8" height="31.20" fill="#2c3d4a"/><rect x="626.99" y="442.40" width="0.8" height="31.20" fill="#2c3d4a"/><rect x="639.65" y="443.40" width="0.8" height="30.20" fill="#2c3d4a"/><rect x="652.30" y="443.40" width="0.8" height="30.20" fill="#2c3d4a"/><rect x="664.96" y="441.30" width="0.8" height="32.30" fill="#2c3d4a"/><rect x="677.62" y="442.40" width="0.8" height="31.20" fill="#2c3d4a"/><rect x="690.27" y="442.40" width="0.8" height="31.20" fill="#2c3d4a"/><rect x="702.93" y="442.40" width="0.8" height="31.20" fill="#2c3d4a"/><rect x="715.58" y="442.40" width="0.8" height="31.20" fill="#2c3d4a"/><rect x="728.24" y="442.40" width="0.8" height="31.20" fill="#2c3d4a"/><rect x="740.90" y="440.40" width="0.8" height="33.20" fill="#2c3d4a"/><rect x="753.55" y="440.40" width="0.8" height="33.20" fill="#2c3d4a"/><rect x="766.21" y="442.15" width="0.8" height="31.45" fill="#2c3d4a"/><rect x="778.86" y="442.15" width="0.8" height="31.45" fill="#2c3d4a"/><rect x="791.52" y="440.40" width="0.8" height="33.20" fill="#2c3d4a"/><rect x="804.17" y="440.40" width="0.8" height="33.20" fill="#2c3d4a"/><rect x="816.83" y="440.40" width="0.8" height="33.20" fill="#2c3d4a"/><rect x="829.49" y="441.30" width="0.8" height="32.30" fill="#2c3d4a"/><rect x="842.14" y="441.50" width="0.8" height="32.10" fill="#2c3d4a"/><rect x="854.80" y="441.50" width="0.8" height="32.10" fill="#2c3d4a"/><rect x="867.45" y="442.40" width="0.8" height="31.20" fill="#2c3d4a"/><rect x="880.11" y="442.40" width="0.8" height="31.20" fill="#2c3d4a"/><rect x="892.76" y="442.60" width="0.8" height="31.00" fill="#2c3d4a"/><rect x="905.42" y="442.60" width="0.8" height="31.00" fill="#2c3d4a"/><rect x="918.08" y="440.30" width="0.8" height="33.30" fill="#2c3d4a"/><rect x="930.73" y="440.40" width="0.8" height="33.20" fill="#2c3d4a"/><rect x="943.39" y="440.40" width="0.8" height="33.20" fill="#2c3d4a"/><rect x="956.04" y="440.40" width="0.8" height="33.20" fill="#2c3d4a"/><rect x="968.70" y="440.40" width="0.8" height="33.20" fill="#2c3d4a"/><rect x="981.35" y="441.30" width="0.8" height="32.30" fill="#2c3d4a"/><rect x="994.01" y="441.30" width="0.8" height="32.30" fill="#2c3d4a"/><rect x="1006.67" y="441.30" width="0.8" height="32.30" fill="#2c3d4a"/><rect x="1019.32" y="442.40" width="0.8" height="31.20" fill="#2c3d4a"/><rect x="1031.98" y="442.40" width="0.8" height="31.20" fill="#2c3d4a"/><rect x="1044.63" y="442.40" width="0.8" height="31.20" fill="#2c3d4a"/><rect x="1057.29" y="441.30" width="0.8" height="32.30" fill="#2c3d4a"/><rect x="1069.94" y="441.30" width="0.8" height="32.30" fill="#2c3d4a"/></svg>
<div class="t" style="left:312px;top:478.9px;font-size:11px;color:#8c929a;letter-spacing:-0.182px;">14:05</div>
<div class="t" style="left:387px;top:478.9px;font-size:11px;color:#8c929a;letter-spacing:-0.182px;">14:12</div>
<div class="t" style="left:475.5px;top:478.9px;font-size:11px;color:#8c929a;letter-spacing:-0.182px;">14:19</div>
<div class="t" style="left:564px;top:478.9px;font-size:11px;color:#8c929a;letter-spacing:-0.182px;">14:26</div>
<div class="t" style="left:652.5px;top:478.9px;font-size:11px;color:#8c929a;letter-spacing:-0.182px;">14:33</div>
<div class="t" style="left:741.5px;top:478.9px;font-size:11px;color:#8c929a;letter-spacing:-0.182px;">14:40</div>
<div class="t" style="left:830px;top:478.9px;font-size:11px;color:#8c929a;letter-spacing:-0.182px;">14:47</div>
<div class="t" style="left:918.5px;top:478.9px;font-size:11px;color:#8c929a;letter-spacing:-0.182px;">14:54</div>
<div class="t" style="left:993.3px;top:478.9px;font-size:11px;color:#8c929a;letter-spacing:-0.182px;">15:01</div>
<div class="b" style="left:1111px;top:56px;width:253px;height:449px;background:#22252a;"></div>
<div class="b" style="left:1380px;top:56px;width:253px;height:449px;background:#22252a;"></div>
<div class="b" style="left:1650px;top:56px;width:254px;height:449px;background:#22252a;"></div>
<svg class="i" style="left:1172px;top:102px" width="130" height="130" viewBox="1172 102 130 130"><circle cx="1237" cy="167" r="55.7" fill="none" stroke="#30353a" stroke-width="6.7" stroke-dasharray="349.973 349.973" transform="rotate(-90 1237 167)"/><circle cx="1237" cy="167" r="55.7" fill="none" stroke="#c93dce" stroke-width="6.7" stroke-dasharray="43.261 349.973" transform="rotate(-90 1237 167)"/><circle cx="1237" cy="167" r="48.2" fill="none" stroke="#30353a" stroke-width="6.3" stroke-dasharray="302.850 302.850" transform="rotate(-90 1237 167)"/><circle cx="1237" cy="167" r="48.2" fill="none" stroke="#4caf50" stroke-width="6.3" stroke-dasharray="214.098 302.850" transform="rotate(-90 1237 167)"/><circle cx="1237" cy="167" r="41.1" fill="none" stroke="#30353a" stroke-width="6.3" stroke-dasharray="258.239 258.239" transform="rotate(-90 1237 167)"/><circle cx="1237" cy="167" r="41.1" fill="none" stroke="#3d90ce" stroke-width="6.3" stroke-dasharray="258.239 258.239" transform="rotate(-90 1237 167)"/><rect x="1236.1" y="107.5" width="1.3" height="21.9" fill="#22252a"/></svg>
<svg class="i" style="left:1442px;top:102px" width="130" height="130" viewBox="1442 102 130 130"><circle cx="1507" cy="167" r="55.7" fill="none" stroke="#30353a" stroke-width="6.7" stroke-dasharray="349.973 349.973" transform="rotate(-90 1507 167)"/><circle cx="1507" cy="167" r="55.7" fill="none" stroke="#c93dce" stroke-width="6.7" stroke-dasharray="231.857 349.973" transform="rotate(-90 1507 167)"/><circle cx="1507" cy="167" r="48.2" fill="none" stroke="#30353a" stroke-width="6.3" stroke-dasharray="302.850 302.850" transform="rotate(-90 1507 167)"/><circle cx="1507" cy="167" r="48.2" fill="none" stroke="#4caf50" stroke-width="6.3" stroke-dasharray="260.787 302.850" transform="rotate(-90 1507 167)"/><circle cx="1507" cy="167" r="41.1" fill="none" stroke="#30353a" stroke-width="6.3" stroke-dasharray="258.239 258.239" transform="rotate(-90 1507 167)"/><circle cx="1507" cy="167" r="41.1" fill="none" stroke="#3d90ce" stroke-width="6.3" stroke-dasharray="258.239 258.239" transform="rotate(-90 1507 167)"/><rect x="1506.1" y="107.5" width="1.3" height="21.9" fill="#22252a"/></svg>
<svg class="i" style="left:1712px;top:102px" width="130" height="130" viewBox="1712 102 130 130"><circle cx="1777" cy="167" r="55.7" fill="none" stroke="#30353a" stroke-width="6.7" stroke-dasharray="349.973 349.973" transform="rotate(-90 1777 167)"/><circle cx="1777" cy="167" r="55.7" fill="none" stroke="#4caf50" stroke-width="6.7" stroke-dasharray="82.633 349.973" transform="rotate(-90 1777 167)"/><rect x="1776.1" y="107.5" width="1.3" height="7.3" fill="#22252a"/></svg>
<div class="t" style="left:1224.3px;top:71.7px;font-size:14px;color:#a3a9b2;letter-spacing:-1.679px;">CPU</div>
<div class="t" style="left:1480.6px;top:71.7px;font-size:14px;color:#a3a9b2;letter-spacing:0.648px;">Memory</div>
<div class="t" style="left:1761.4px;top:71.7px;font-size:14px;color:#a3a9b2;letter-spacing:-0.237px;">Pods</div>
<div class="b" style="left:1149px;top:259px;width:9px;height:9px;background:#c93dce;"></div><div class="t" style="left:1163px;top:254px;font-size:14px;color:#a3a9b2;letter-spacing:-0.250px;">Usage: 0.24</div><div class="b" style="left:1149px;top:292.3px;width:9px;height:9px;background:#4caf50;"></div><div class="t" style="left:1163px;top:287.3px;font-size:14px;color:#a3a9b2;letter-spacing:-0.129px;">Requests: 3.23</div><div class="b" style="left:1149px;top:325.3px;width:9px;height:9px;background:#3d90ce;"></div><div class="t" style="left:1163px;top:320.3px;font-size:14px;color:#a3a9b2;letter-spacing:0.077px;">Limits: 24.10</div><div class="b" style="left:1149px;top:358.7px;width:9px;height:9px;background:#052c58;"></div><div class="t" style="left:1163px;top:353.7px;font-size:14px;color:#a3a9b2;letter-spacing:0.045px;">Allocatable Capacity: 1.90</div><div class="b" style="left:1149px;top:392.2px;width:9px;height:9px;background:#363a3e;"></div><div class="t" style="left:1163px;top:387.2px;font-size:14px;color:#a3a9b2;letter-spacing:-0.084px;">Capacity: 2.00</div>
<div class="b" style="left:1411px;top:259px;width:9px;height:9px;background:#c93dce;"></div><div class="t" style="left:1425.5px;top:254px;font-size:14px;color:#a3a9b2;letter-spacing:-0.279px;">Usage: 3.0GiB</div><div class="b" style="left:1411px;top:292.3px;width:9px;height:9px;background:#4caf50;"></div><div class="t" style="left:1425.5px;top:287.3px;font-size:14px;color:#a3a9b2;letter-spacing:-0.175px;">Requests: 3.8GiB</div><div class="b" style="left:1411px;top:325.3px;width:9px;height:9px;background:#3d90ce;"></div><div class="t" style="left:1425.5px;top:320.3px;font-size:14px;color:#a3a9b2;letter-spacing:-0.002px;">Limits: 26.8GiB</div><div class="b" style="left:1411px;top:358.7px;width:9px;height:9px;background:#052c58;"></div><div class="t" style="left:1425.5px;top:353.7px;font-size:14px;color:#a3a9b2;letter-spacing:0.010px;">Allocatable Capacity: 4.5GiB</div><div class="b" style="left:1411px;top:392.2px;width:9px;height:9px;background:#363a3e;"></div><div class="t" style="left:1425.5px;top:387.2px;font-size:14px;color:#a3a9b2;letter-spacing:-0.130px;">Capacity: 6.8GiB</div>
<div class="b" style="left:1727px;top:259px;width:9px;height:9px;background:#4caf50;"></div><div class="t" style="left:1742px;top:254px;font-size:14px;color:#a3a9b2;letter-spacing:-0.303px;">Usage: 26</div><div class="b" style="left:1727px;top:292.3px;width:9px;height:9px;background:#363a3e;"></div><div class="t" style="left:1742px;top:287.3px;font-size:14px;color:#a3a9b2;letter-spacing:-0.006px;">Capacity: 110</div>
<svg class="i" style="left:1118.55px;top:426.75px" width="21.5" height="21.5" viewBox="0 0 24 24" fill="#a3a9b2" ><path d="M12 2C6.48 2 2 6.48 2 12s4.48 10 10 10 10-4.48 10-10S17.52 2 12 2zm1 15h-2v-6h2v6zm0-8h-2V7h2v2z"/></svg>
<div class="t" style="left:1155.6px;top:416.8px;font-size:14px;color:#a3a9b2;letter-spacing:0.270px;">Specified limits are higher than</div>
<div class="t" style="left:1155.6px;top:438px;font-size:14px;color:#a3a9b2;letter-spacing:0.186px;">node capacity!</div>
<svg class="i" style="left:1388.35px;top:426.75px" width="21.5" height="21.5" viewBox="0 0 24 24" fill="#a3a9b2" ><path d="M12 2C6.48 2 2 6.48 2 12s4.48 10 10 10 10-4.48 10-10S17.52 2 12 2zm1 15h-2v-6h2v6zm0-8h-2V7h2v2z"/></svg>
<div class="t" style="left:1425.5px;top:416.8px;font-size:14px;color:#a3a9b2;letter-spacing:0.270px;">Specified limits are higher than</div>
<div class="t" style="left:1425.5px;top:438px;font-size:14px;color:#a3a9b2;letter-spacing:0.186px;">node capacity!</div>
<div class="b" style="left:301px;top:521px;width:1603px;height:449px;background:#22252a;"></div>
<svg class="i" style="left:1053.8px;top:554.2px" width="19" height="19" viewBox="0 0 24 24" fill="#d04a2c" ><path d="M11 15h2v2h-2zm0-8h2v6h-2zm.99-5C6.47 2 2 6.48 2 12s4.47 10 9.99 10C17.52 22 22 17.52 22 12S17.52 2 11.99 2zM12 20c-4.42 0-8-3.58-8-8s3.58-8 8-8 8 3.58 8 8-3.58 8-8 8z"/></svg>
<div class="t" style="left:1077px;top:553px;font-size:14px;color:#fff;letter-spacing:0.132px;text-shadow:0 0 .4px #fff;">Warnings: 2</div>
<div class="b" style="left:301px;top:591px;width:1603px;height:36px;background:#2e3139;"></div>
<div class="b" style="left:301px;top:627px;width:1603px;height:1px;background:#33373d;"></div>
<div class="t" style="left:313.5px;top:599px;font-size:14px;color:#fff;letter-spacing:-0.218px;text-shadow:0 0 .4px #fff;">Message</div>
<div class="t" style="left:985px;top:599px;font-size:14px;color:#fff;letter-spacing:0.208px;text-shadow:0 0 .4px #fff;">Object</div>
<div class="t" style="left:1436px;top:599px;font-size:14px;color:#fff;letter-spacing:-0.017px;text-shadow:0 0 .4px #fff;">Type</div>
<div class="t" style="left:1664.5px;top:599px;font-size:14px;color:#fff;letter-spacing:-0.205px;text-shadow:0 0 .4px #fff;">Age</div>
<svg class="i" style="left:1416px;top:606px" width="10" height="6" viewBox="0 0 10 6"><path d="M0.300 5.500L5 0.800L9.700 5.500z" fill="#fff"/></svg>
<div class="t" style="left:313px;top:635.7px;font-size:14px;color:#8e949c;letter-spacing:0.175px;">AutoDiscovery is enabled</div>
<div class="t" style="left:313px;top:673px;font-size:14px;color:#8e949c;letter-spacing:0.337px;">Back-off restarting failed container</div>
<div class="t" style="left:980.5px;top:635.7px;font-size:14px;color:#8e949c;letter-spacing:0.453px;">shipa-controller</div>
<div class="t" style="left:980.5px;top:673px;font-size:14px;color:#8e949c;letter-spacing:0.282px;">shipa-controller-7d655b79df-v26tc</div>
<div class="t" style="left:1428.6px;top:635.7px;font-size:14px;color:#8e949c;letter-spacing:-0.125px;">Event</div>
<div class="t" style="left:1428.6px;top:673px;font-size:14px;color:#8e949c;letter-spacing:-0.125px;">Event</div>
<div class="t" style="left:1656.5px;top:635.7px;font-size:14px;color:#8e949c;letter-spacing:0.045px;">2m22s</div>
<div class="t" style="left:1656.5px;top:673px;font-size:14px;color:#8e949c;letter-spacing:0.021px;">45d</div>
<div class="b" style="left:285px;top:986px;width:1635px;height:33px;background:#2e3139;"></div>
<div class="b" style="left:285px;top:986px;width:1635px;height:1px;background:#4a4e55;"></div>
<svg class="i" style="left:316.4px;top:993.4px" width="19.4" height="19.4" viewBox="0 0 24 24" fill="none" ><rect x="2.600" y="4.600" width="18.800" height="14.800" rx="0.600" fill="none" stroke="#a3a9b2" stroke-width="1.700"/><path d="M6 10.300l3.600 2.600-3.600 2.600" fill="none" stroke="#a3a9b2" stroke-width="1.700"/><path d="M11.300 15.800h5.400" stroke="#a3a9b2" stroke-width="1.800"/><rect x="2.600" y="4.600" width="18.800" height="3.200" fill="#a3a9b2"/></svg>
<div class="t" style="left:343px;top:993px;font-size:14.5px;color:#a3a9b2;letter-spacing:0.315px;">Terminal</div>
<svg class="i" style="left:439.7px;top:992.5px" width="21.8" height="21.8" viewBox="0 0 24 24" fill="#c0c5cc" ><path d="M19 13h-6v6h-2v-6H5v-2h6V5h2v6h6v2z"/></svg>
<svg class="i" style="left:1854px;top:992.5px" width="21" height="21" viewBox="0 0 24 24" fill="#c0c5cc" ><path d="M7 14H5v5h5v-2H7v-3zm-2-4h2V7h3V5H5v5zm12 7h-3v2h5v-5h-2v3zM14 5v2h3v3h2V5h-5z"/></svg>
<svg class="i" style="left:1883px;top:993px" width="21" height="21" viewBox="0 0 24 24" fill="#c0c5cc" ><path d="M7.41 15.41L12 10.83l4.59 4.58L18 14l-6-6-6 6z"/></svg>
<svg class="i" style="left:1568.9px;top:1020.9px" width="18.2" height="18.2" viewBox="0 0 24 24" fill="#fff" ><path d="M12 2C6.48 2 2 6.48 2 12s4.48 10 10 10 10-4.48 10-10S17.52 2 12 2zm7.46 7.12l-2.78 1.15c-.51-1.36-1.58-2.44-2.95-2.94l1.15-2.78c2.1.8 3.77 2.47 4.58 4.57zM12 15c-1.66 0-3-1.34-3-3s1.34-3 3-3 3 1.34 3 3-1.34 3-3 3zM9.13 4.54l1.17 2.78c-1.38.5-2.47 1.59-2.98 2.97L4.54 9.13c.81-2.11 2.48-3.78 4.59-4.59zM4.54 14.87l2.78-1.15c.51 1.38 1.59 2.46 2.97 2.96l-1.17 2.78c-2.1-.81-3.77-2.48-4.58-4.59zm10.34 4.59l-1.15-2.78c1.37-.51 2.45-1.59 2.95-2.97l2.78 1.17c-.81 2.1-2.48 3.77-4.58 4.58z"/></svg>
<div class="t" style="left:1591.2px;top:1020px;font-size:13px;color:#fff;letter-spacing:-0.039px;text-shadow:.3px 0 0 #fff;">Support</div>
<svg class="i" style="left:1653.3px;top:1021.5px" width="17" height="17" viewBox="0 0 24 24" fill="#fff" ><g fill="none" stroke="#fff" stroke-linecap="round"><circle cx="12" cy="12" r="6.400" stroke-width="2.32"/><line x1="12.00" y1="10.80" x2="12.00" y2="1.10" stroke-width="1.68"/><line x1="12.94" y1="11.25" x2="20.52" y2="5.20" stroke-width="1.68"/><line x1="13.17" y1="12.27" x2="22.63" y2="14.43" stroke-width="1.68"/><line x1="12.52" y1="13.08" x2="16.73" y2="21.82" stroke-width="1.68"/><line x1="11.48" y1="13.08" x2="7.27" y2="21.82" stroke-width="1.68"/><line x1="10.83" y1="12.27" x2="1.37" y2="14.43" stroke-width="1.68"/><line x1="11.06" y1="11.25" x2="3.48" y2="5.20" stroke-width="1.68"/></g><circle cx="12" cy="12" r="2" fill="#fff"/></svg>
<div class="t" style="left:1674.9px;top:1020px;font-size:13px;color:#fff;letter-spacing:-0.459px;text-shadow:.3px 0 0 #fff;">LDK: Stopped</div>
<svg class="i" style="left:1774.5px;top:1021px" width="17" height="17" viewBox="0 0 24 24" fill="#fff" ><path d="M22 4v-.5C22 2.12 20.88 1 19.5 1S17 2.12 17 3.5V4c-.55 0-1 .45-1 1v4c0 .55.45 1 1 1h5c.55 0 1-.45 1-1V5c0-.55-.45-1-1-1zm-.8 0h-3.4v-.5c0-.94.76-1.7 1.7-1.7s1.7.76 1.7 1.7V4zm-2.28 8c.04.33.08.66.08 1 0 2.08-.8 3.97-2.1 5.39-.26-.81-1-1.39-1.9-1.39h-1v-3c0-.55-.45-1-1-1H7v-2h2c.55 0 1-.45 1-1V8h2c1.1 0 2-.9 2-2V3.46c-.95-.3-1.95-.46-3-.46C5.480 3 1 7.480 1 13s4.480 10 10 10 10-4.480 10-10c0-.34-.02-.67-.05-1h-2.030zM10 20.930c-3.950-.49-7-3.850-7-7.930 0-.62.080-1.210.210-1.790L8 16v1c0 1.100.9 2 2 2v1.930z"/></svg>
<div class="t" style="left:1795.4px;top:1020px;font-size:13px;color:#fff;letter-spacing:-0.403px;text-shadow:.3px 0 0 #fff;">Encryption: AES-256</div>
</body></html>
